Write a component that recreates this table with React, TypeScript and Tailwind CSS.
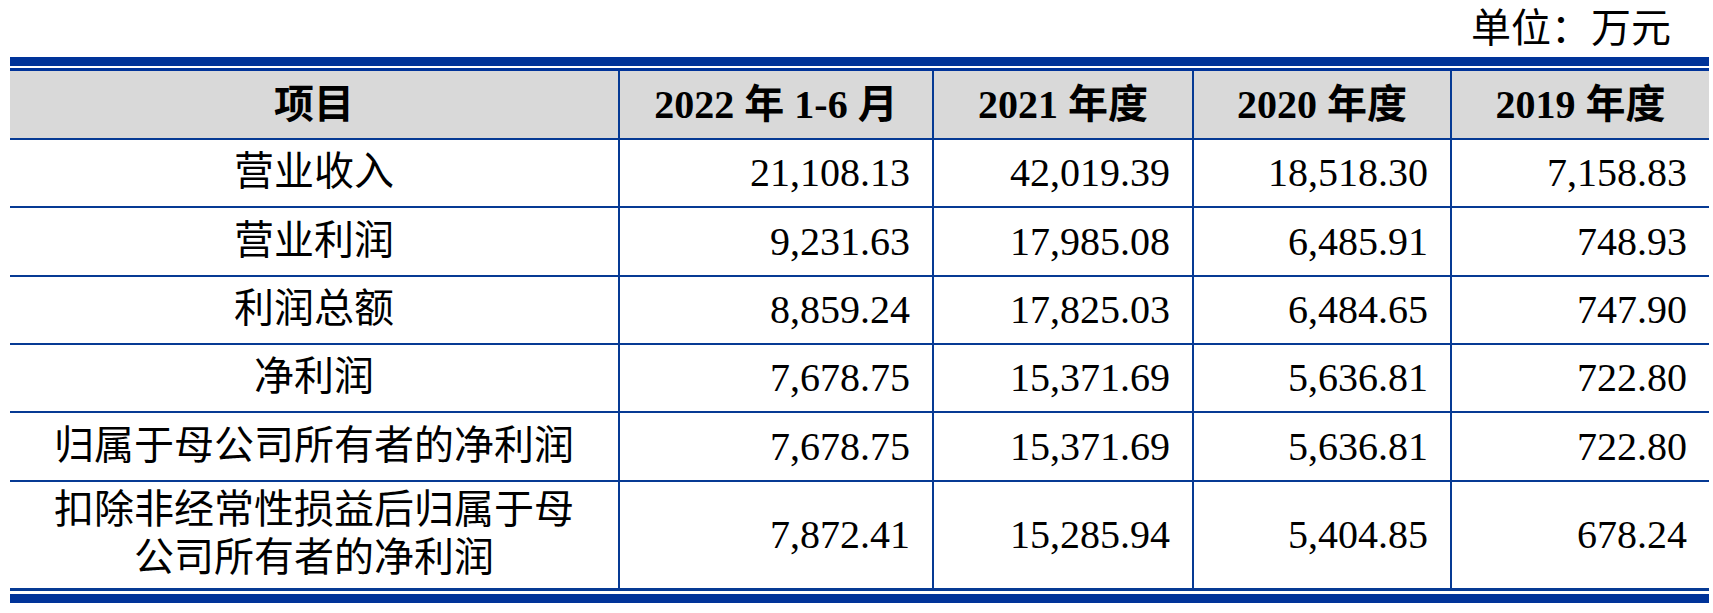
const headers = ["项目", "2022 年 1-6 月", "2021 年度", "2020 年度", "2019 年度"];

const rows: { label: string[]; values: string[]; h: string }[] = [
  { label: ["营业收入"], values: ["21,108.13", "42,019.39", "18,518.30", "7,158.83"], h: "h-[68px]" },
  { label: ["营业利润"], values: ["9,231.63", "17,985.08", "6,485.91", "748.93"], h: "h-[69px]" },
  { label: ["利润总额"], values: ["8,859.24", "17,825.03", "6,484.65", "747.90"], h: "h-[68px]" },
  { label: ["净利润"], values: ["7,678.75", "15,371.69", "5,636.81", "722.80"], h: "h-[68px]" },
  { label: ["归属于母公司所有者的净利润"], values: ["7,678.75", "15,371.69", "5,636.81", "722.80"], h: "h-[69px]" },
  {
    label: ["扣除非经常性损益后归属于母", "公司所有者的净利润"],
    values: ["7,872.41", "15,285.94", "5,404.85", "678.24"],
    h: "h-[109px]",
  },
];

const App = () => {
  return (
    <div className="w-[1713px] h-[613px] bg-white text-black font-['Liberation_Serif','Noto_Sans_CJK_SC',serif] text-[40px]">
      {/* unit caption */}
      <div className="h-[57px] flex items-center justify-end pr-[42px] leading-[48px]">单位：万元</div>

      <div className="ml-[10px] w-[1699px]">
        {/* top double rule */}
        <div className="h-[9px] bg-[#003399]" />
        <div className="h-[2px]" />
        <div className="h-[3px] bg-[#003399]" />

        <div className="grid grid-cols-[610px_314px_260px_258px_257px]">
          {headers.map((h, i) => (
            <div
              key={h}
              className={`h-[69px] bg-[#d9d9d9] border-b-2 border-[#063a94] flex items-center justify-center font-bold leading-[48px] ${
                i < 4 ? "border-r-2" : ""
              }`}
            >
              {h}
            </div>
          ))}

          {rows.map((row, r) => {
            const last = r === rows.length - 1;
            const bottom = last ? "border-b-[3px]" : "border-b-2";
            return [
              <div
                key={`l${r}`}
                className={`${row.h} ${bottom} border-r-2 border-[#063a94] flex flex-col items-center justify-center leading-[48px] pb-[2px]`}
              >
                {row.label.map((line) => (
                  <span key={line}>{line}</span>
                ))}
              </div>,
              ...row.values.map((v, i) => (
                <div
                  key={`v${r}-${i}`}
                  className={`${row.h} ${bottom} border-[#063a94] flex items-center justify-end pr-[22px] leading-[48px] ${
                    i < 3 ? "border-r-2" : "pr-[21px]"
                  }`}
                >
                  {v}
                </div>
              )),
            ];
          })}
        </div>

        {/* bottom double rule */}
        <div className="h-[3px]" />
        <div className="h-[9px] bg-[#003399]" />
      </div>
    </div>
  );
};

export default App;
